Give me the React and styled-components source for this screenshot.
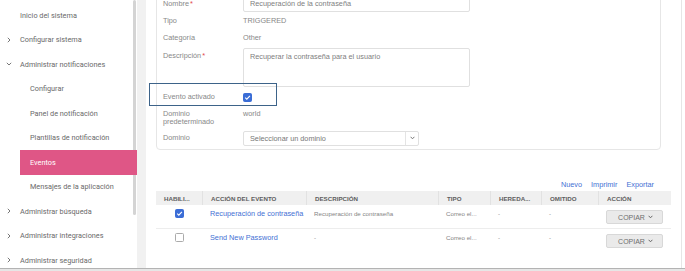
import React from 'react';
import styled, { createGlobalStyle } from 'styled-components';

const Global = createGlobalStyle`
  html, body { margin: 0; padding: 0; background: #fff; }
  body { font-family: "Liberation Sans", Arial, sans-serif; }
  * { box-sizing: border-box; }
`;

const Page = styled.div`
  width: 685px;
  height: 271px;
  display: flex;
  flex-direction: column;
  overflow: hidden;
  background: #fff;
`;

const Body = styled.div`
  flex: 1;
  display: flex;
  min-height: 0;
`;

const BottomBar = styled.div`
  height: 3px;
  flex: none;
  border-top: 1px solid #b3b3b3;
  background: #e6e6e6;
`;

/* ---------- Sidebar ---------- */
const Sidebar = styled.nav`
  width: 137px;
  flex: none;
  position: relative;
  padding-top: 3px;
  overflow: hidden;
  background: #fff;
  font-family: Roboto, "Liberation Sans", sans-serif;
  font-size: 7.3px;
  color: #6a6a6a;
`;

const ScrollThumb = styled.div`
  position: absolute;
  left: 133px;
  top: 0;
  width: 3px;
  height: 215px;
  border-radius: 2px;
  background: #d4d4d4;
`;

const NavItem = styled.div`
  position: relative;
  z-index: 1;
  height: 24.5px;
  display: flex;
  align-items: center;
  white-space: nowrap;
  margin-left: ${p => (p.$sub ? '20px' : '0')};
  padding-left: ${p => (p.$sub ? '10px' : '6px')};
  background: ${p => (p.$active ? '#df5686' : 'transparent')};
  color: ${p => (p.$active ? '#fff' : '#6a6a6a')};
`;

const ChevronSlot = styled.span`
  width: 14px;
  flex: none;
  display: flex;
  align-items: center;
`;

const Chevron = ({ dir }) => (
  <svg width="6" height="6" viewBox="0 0 6 6">
    {dir === 'down' ? (
      <path d="M0.8 1.8 L3 4 L5.2 1.8" fill="none" stroke="#777" strokeWidth="1" />
    ) : (
      <path d="M1.8 0.8 L4 3 L1.8 5.2" fill="none" stroke="#777" strokeWidth="1" />
    )}
  </svg>
);

const GapStrip = styled.div`
  width: 9px;
  flex: none;
  background: #f1f1f1;
`;

/* ---------- Main panel ---------- */
const Main = styled.main`
  flex: 1;
  min-width: 0;
  margin-right: 3px;
  border-right: 1px solid #e6e6e6;
  background: #fff;
  padding-left: 10px;
  font-size: 7.3px;
  color: #868686;
`;

const Card = styled.section`
  width: 505px;
  margin-top: -6px;
  border: 1px solid #e6e6e6;
  border-radius: 4px;
  padding: 0 0 3px 6px;
`;

const FormRow = styled.div`
  position: relative;
  display: flex;
  align-items: ${p => (p.$top ? 'flex-start' : 'center')};
  height: ${p => p.$h}px;
  margin-top: ${p => p.$mt || 0}px;
`;

const Label = styled.div`
  width: 80px;
  flex: none;
  line-height: 8px;
  color: #888;
  padding-top: ${p => p.$pt || 0}px;
`;

const Req = styled.span`
  color: #e2474b;
  margin-left: 1px;
`;

const Value = styled.div`
  line-height: 8px;
  color: #888;
`;

const TextInput = styled.div`
  width: 227px;
  height: 100%;
  border: 1px solid #e0e0e0;
  border-radius: 2px;
  padding: ${p => (p.$multi ? '4px 6px' : '0 6px')};
  display: flex;
  align-items: ${p => (p.$multi ? 'flex-start' : 'center')};
  color: #808080;
  line-height: 8px;
`;

const Select = styled.div`
  width: 176px;
  height: 15px;
  border: 1px solid #e0e0e0;
  border-radius: 2px;
  display: flex;
  align-items: stretch;
  color: #777;
`;

const SelectText = styled.div`
  flex: 1;
  display: flex;
  align-items: center;
  padding-left: 6px;
`;

const SelectArrow = styled.div`
  width: 13px;
  border-left: 1px solid #e4e4e4;
  display: flex;
  align-items: center;
  justify-content: center;
`;

const Check = styled.span`
  width: 9px;
  height: 9px;
  flex: none;
  border-radius: 1.5px;
  display: inline-flex;
  align-items: center;
  justify-content: center;
  background: ${p => (p.$on ? '#3b6dd6' : '#fff')};
  border: 1px solid ${p => (p.$on ? '#3b6dd6' : '#ababab')};
`;

const CheckBox = ({ on }) => (
  <Check $on={on}>
    {on && (
      <svg width="7" height="7" viewBox="0 0 7 7">
        <path d="M1.2 3.6 L2.8 5.1 L5.9 1.8" fill="none" stroke="#fff" strokeWidth="1.1" />
      </svg>
    )}
  </Check>
);

const Highlight = styled.div`
  position: absolute;
  left: -14px;
  top: -6px;
  width: 128px;
  height: 23px;
  border: 1.5px solid #3d6389;
  pointer-events: none;
`;

const Actions = styled.div`
  width: 515px;
  margin-top: 29px;
  height: 10px;
  display: flex;
  justify-content: flex-end;
  align-items: center;
  gap: 9px;
  padding-right: 17px;
`;

const ActionLink = styled.a`
  color: #4471d4;
  text-decoration: none;
  font-size: 7.3px;
`;

/* ---------- Table ---------- */
const COLS = '46px 104px 132px 52px 51px 57px 73px';

const Table = styled.div`
  width: 515px;
  margin-top: 2px;
`;

const HeadRow = styled.div`
  display: grid;
  grid-template-columns: ${COLS};
  height: 14px;
  background: #f0f0f0;
`;

const HeadCell = styled.div`
  display: flex;
  align-items: center;
  padding-left: 8px;
  font-size: 6.2px;
  font-weight: bold;
  color: #5e5e5e;
  white-space: nowrap;
  border-left: ${p => (p.$first ? 'none' : '1px solid #e2e2e2')};
`;

const Row = styled.div`
  display: grid;
  grid-template-columns: ${COLS};
  height: 24px;
  border-bottom: ${p => (p.$last ? 'none' : '1px solid #ededed')};
`;

const Cell = styled.div`
  padding: 5px 0 0 8px;
  line-height: 8px;
  white-space: nowrap;
  overflow: hidden;
  font-size: ${p => (p.$small ? '6.2px' : '7.3px')};
  color: ${p => (p.$link ? '#4471d4' : '#858585')};
`;

const CheckCell = styled.div`
  display: flex;
  justify-content: center;
  padding-top: 4px;
`;

const BtnCell = styled.div`
  padding: 5px 0 0 8px;
`;

const CopyButton = styled.button`
  width: 57px;
  height: 14px;
  border: 1px solid #d8d8d8;
  border-radius: 2px;
  background: #eaeaea;
  color: #6e6e6e;
  font-family: "Liberation Sans", Arial, sans-serif;
  font-size: 7px;
  display: flex;
  align-items: center;
  justify-content: center;
  gap: 3px;
  padding: 0 0 0 2px;
`;

const SmallDown = ({ color = '#666' }) => (
  <svg width="5" height="4" viewBox="0 0 5 4">
    <path d="M0.6 0.8 L2.5 2.8 L4.4 0.8" fill="none" stroke={color} strokeWidth="1" />
  </svg>
);

const navItems = [
  { label: 'Inicio del sistema' },
  { label: 'Configurar sistema', chevron: 'right' },
  { label: 'Administrar notificaciones', chevron: 'down' },
  { label: 'Configurar', sub: true },
  { label: 'Panel de notificación', sub: true },
  { label: 'Plantillas de notificación', sub: true },
  { label: 'Eventos', sub: true, active: true },
  { label: 'Mensajes de la aplicación', sub: true },
  { label: 'Administrar búsqueda', chevron: 'right' },
  { label: 'Administrar integraciones', chevron: 'right' },
  { label: 'Administrar seguridad', chevron: 'right' },
];

const heads = ['HABILI...', 'ACCIÓN DEL EVENTO', 'DESCRIPCIÓN', 'TIPO', 'HEREDA...', 'OMITIDO', 'ACCIÓN'];

const rows = [
  { on: true, name: 'Recuperación de contraseña', desc: 'Recuperación de contraseña' },
  { on: false, name: 'Send New Password', desc: '-' },
];

export default function App() {
  return (
    <Page>
      <Global />
      <Body>
        <Sidebar>
          <ScrollThumb />
          {navItems.map(it => (
            <NavItem key={it.label} $sub={it.sub} $active={it.active}>
              {!it.sub && <ChevronSlot>{it.chevron && <Chevron dir={it.chevron} />}</ChevronSlot>}
              {it.label}
            </NavItem>
          ))}
        </Sidebar>
        <GapStrip />
        <Main>
          <Card>
            <FormRow $h={17}>
              <Label>Nombre<Req>*</Req></Label>
              <TextInput>Recuperación de la contraseña</TextInput>
            </FormRow>
            <FormRow $h={16} $mt={1}>
              <Label>Tipo</Label>
              <Value>TRIGGERED</Value>
            </FormRow>
            <FormRow $h={16} $mt={1}>
              <Label>Categoría</Label>
              <Value>Other</Value>
            </FormRow>
            <FormRow $h={39} $mt={2} $top>
              <Label $pt={4}>Descripción<Req>*</Req></Label>
              <TextInput $multi>Recuperar la contraseña para el usuario</TextInput>
            </FormRow>
            <FormRow $h={16} $mt={2}>
              <Highlight />
              <Label>Evento activado</Label>
              <CheckBox on />
            </FormRow>
            <FormRow $h={16} $mt={5} $top>
              <Label>Dominio<br />predeterminado</Label>
              <Value>world</Value>
            </FormRow>
            <FormRow $h={16} $mt={4}>
              <Label>Dominio</Label>
              <Select>
                <SelectText>Seleccionar un dominio</SelectText>
                <SelectArrow><SmallDown color="#777" /></SelectArrow>
              </Select>
            </FormRow>
          </Card>

          <Actions>
            <ActionLink>Nuevo</ActionLink>
            <ActionLink>Imprimir</ActionLink>
            <ActionLink>Exportar</ActionLink>
          </Actions>

          <Table>
            <HeadRow>
              {heads.map((h, i) => (
                <HeadCell key={h} $first={i === 0}>{h}</HeadCell>
              ))}
            </HeadRow>
            {rows.map((r, i) => (
              <Row key={r.name} $last={i === rows.length - 1}>
                <CheckCell><CheckBox on={r.on} /></CheckCell>
                <Cell $link>{r.name}</Cell>
                <Cell $small>{r.desc}</Cell>
                <Cell $small>Correo el...</Cell>
                <Cell $small>-</Cell>
                <Cell $small>-</Cell>
                <BtnCell>
                  <CopyButton>COPIAR <SmallDown /></CopyButton>
                </BtnCell>
              </Row>
            ))}
          </Table>
        </Main>
      </Body>
      <BottomBar />
    </Page>
  );
}
